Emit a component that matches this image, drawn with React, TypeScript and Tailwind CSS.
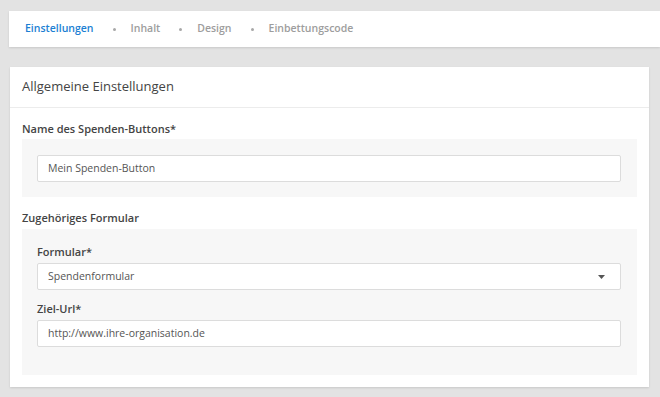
const font = { fontFamily: '"Open Sans", "Liberation Sans", sans-serif' }

const steps = ['Einstellungen', 'Inhalt', 'Design', 'Einbettungscode']

function Field({ value, select }: { value: string; select?: boolean }) {
  return (
    <div className="flex h-[27px] items-center justify-between rounded-[2px] border border-[#dcdcdc] bg-white pl-[10px] pr-[15px] text-[10.5px] text-[#555]">
      <span>{value}</span>
      {select && (
        <svg width="7" height="4" viewBox="0 0 7 4">
          <path d="M0 0h7L3.5 4z" fill="#555" />
        </svg>
      )}
    </div>
  )
}

function Label({ children, className = '' }: { children: string; className?: string }) {
  return <div className={`text-[11px] font-semibold leading-[15px] text-[#444] ${className}`}>{children}</div>
}

export default function App() {
  return (
    <div className="min-h-[397px] w-[660px] bg-[#e3e3e3] pt-[11px]" style={font}>
      <nav className="ml-[9px] flex h-[36px] items-center bg-white pl-[16px] shadow-[0_1px_2px_rgba(0,0,0,0.12)]">
        {steps.map((s, i) => (
          <div key={s} className="flex items-center">
            {i > 0 && <span className="ml-[19px] mr-[15px] h-[3px] w-[3px] rounded-full bg-[#a8a8a8]" />}
            <span className={`text-[10.5px] font-semibold ${i === 0 ? 'text-[#1c7fd3]' : 'text-[#9d9d9d]'}`}>{s}</span>
          </div>
        ))}
      </nav>

      <div className="ml-[10px] mt-[20px] w-[639px] bg-white shadow-[0_1px_2px_rgba(0,0,0,0.12)]">
        <div className="flex h-[41px] items-center border-b border-[#ececec] px-[12px] text-[13px] text-[#444]">
          Allgemeine Einstellungen
        </div>
        <div className="px-[12px] pb-[12px] pt-[13px]">
          <Label>Name des Spenden-Buttons*</Label>
          <div className="mt-[3px] bg-[#f7f7f7] pb-[15px] pl-[15px] pr-[16px] pt-[16px]">
            <Field value="Mein Spenden-Button" />
          </div>

          <Label className="mt-[13px]">Zugehöriges Formular</Label>
          <div className="mt-[4px] bg-[#f7f7f7] pb-[28px] pl-[15px] pr-[16px] pt-[15px]">
            <Label>Formular*</Label>
            <div className="mt-[4px]">
              <Field value="Spendenformular" select />
            </div>
            <Label className="mt-[11px]">Ziel-Url*</Label>
            <div className="mt-[4px]">
              <Field value="http://www.ihre-organisation.de" />
            </div>
          </div>
        </div>
      </div>
    </div>
  )
}
